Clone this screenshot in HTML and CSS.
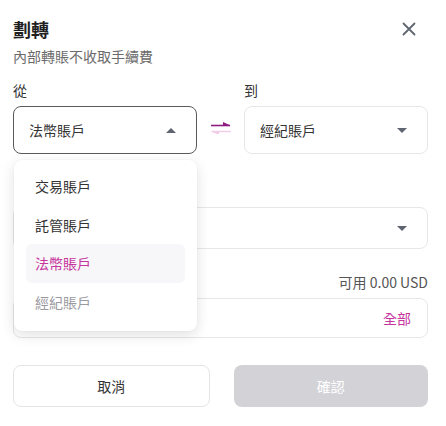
FILE: index.html
```html
<!DOCTYPE html>
<html lang="zh-Hant">
<head>
<meta charset="utf-8">
<link rel="stylesheet" href="styles.css">
</head>
<body>
<div class="dialog">
  <div class="header">
    <div class="title">劃轉</div>
    <svg class="close" width="14" height="14" viewBox="0 0 14 14"><path d="M1.5 1.5 L12.5 12.5 M12.5 1.5 L1.5 12.5" stroke="#5f6570" stroke-width="1.8" stroke-linecap="round"/></svg>
  </div>
  <div class="subtitle">內部轉賬不收取手續費</div>

  <div class="transfer">
    <div class="col">
      <div class="label">從</div>
      <div class="select active">
        <span>法幣賬戶</span>
        <span class="caret up"></span>
      </div>
      <div class="menu">
        <div class="item">交易賬戶</div>
        <div class="item">託管賬戶</div>
        <div class="item selected">法幣賬戶</div>
        <div class="item disabled">經紀賬戶</div>
      </div>
    </div>
    <div class="swap">
      <svg width="22" height="12" viewBox="0 0 22 12">
        <path d="M1 3.5 H20" stroke="#8e1b80" stroke-width="1.6"/>
        <path d="M13 0 L20.5 3.5 L13 3.5 Z" fill="#8e1b80"/>
        <path d="M1.5 9.5 H21" stroke="#f1cbe8" stroke-width="1.4"/>
        <path d="M9 13 L1.5 9.5 L9 9.5 Z" fill="#f1cbe8"/>
      </svg>
    </div>
    <div class="col">
      <div class="label">到</div>
      <div class="select">
        <span>經紀賬戶</span>
        <span class="caret"></span>
      </div>
    </div>
  </div>

  <div class="spacer-label"></div>
  <div class="select coin">
    <span></span>
    <span class="caret"></span>
  </div>

  <div class="amount-head">
    <span class="avail">可用 0.00 USD</span>
  </div>
  <div class="input">
    <span class="all">全部</span>
  </div>

  <div class="buttons">
    <div class="btn cancel">取消</div>
    <div class="btn confirm">確認</div>
  </div>
</div>
</body>
</html>
```
FILE: styles.css
```css
* { box-sizing: border-box; }
html, body { margin: 0; padding: 0; background: #fff; }
body {
  font-family: "Noto Sans CJK TC", "Noto Sans", sans-serif;
  color: #333;
}
.dialog {
  width: 415px;
  margin-left: 13px;
  padding-top: 17px;
}
.header {
  display: flex;
  justify-content: space-between;
  align-items: center;
  height: 24px;
}
.title {
  font-size: 18px;
  font-weight: 700;
  line-height: 24px;
  color: #1f1f1f;
}
.close { margin-right: 12px; }
.subtitle {
  margin-top: 5px;
  font-size: 14px;
  line-height: 20px;
  color: #6b6b6b;
}
.transfer {
  display: flex;
  align-items: flex-end;
  margin-top: 14px;
}
.col {
  width: 184px;
  position: relative;
}
.label {
  font-size: 14px;
  line-height: 20px;
  color: #333;
}
.col .label { margin-bottom: 6px; }
.select {
  height: 48px;
  border: 1px solid #e7e7ea;
  border-radius: 8px;
  display: flex;
  align-items: center;
  justify-content: space-between;
  padding: 0 20px 0 15px;
  font-size: 14px;
  color: #333;
}
.select.active { border-color: #5a5a5e; }
.caret {
  width: 0; height: 0;
  border-left: 5px solid transparent;
  border-right: 5px solid transparent;
  border-top: 5px solid #5f6570;
}
.caret.up {
  border-top: 0;
  border-bottom: 5px solid #5f6570;
}
.swap {
  width: 47px;
  height: 48px;
  display: flex;
  align-items: center;
  justify-content: center;
}
.swap svg { margin-top: -4px; }
.menu {
  position: absolute;
  left: 1px;
  top: 80px;
  width: 183px;
  z-index: 5;
  background: #fff;
  border-radius: 8px;
  box-shadow: 0 4px 14px rgba(0,0,0,0.12), 0 0 2px rgba(0,0,0,0.06);
  padding: 7px 12px 10px;
}
.item {
  height: 38.5px;
  display: flex;
  align-items: center;
  padding-left: 9px;
  font-size: 14px;
  color: #333;
  border-radius: 6px;
}
.item.selected { background: #f7f7f9; color: #c6349d; }
.item.disabled { color: #9a9aa0; }
.spacer-label { height: 20px; margin-top: 26px; }
.coin { margin-top: 7px; height: 42px; }
.amount-head {
  margin-top: 23px;
  display: flex;
  justify-content: flex-end;
  font-size: 14px;
  line-height: 20px;
}
.avail { color: #555; }
.input {
  margin-top: 6px;
  height: 40px;
  border: 1px solid #e7e7ea;
  border-radius: 8px;
  display: flex;
  align-items: center;
  justify-content: flex-end;
  padding: 0 16px;
  font-size: 14px;
}
.all { color: #c6349d; }
.buttons {
  margin-top: 27px;
  display: flex;
  gap: 24px;
}
.btn {
  flex: 1;
  height: 42px;
  border-radius: 8px;
  display: flex;
  align-items: center;
  justify-content: center;
  font-size: 14px;
}
.cancel { border: 1px solid #e4e4e7; color: #333; }
.confirm { background: #d2d2d7; color: #fff; }
```
